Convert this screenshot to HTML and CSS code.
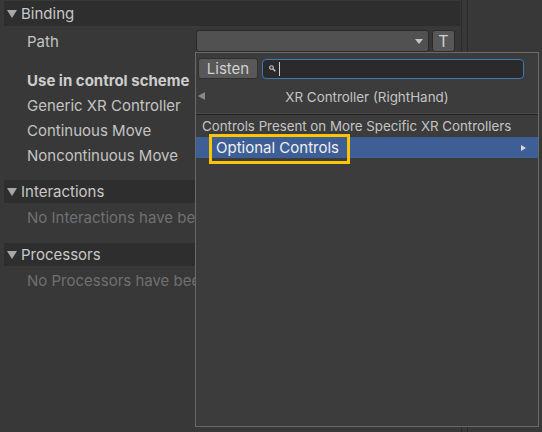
FILE: index.html
```html
<!DOCTYPE html>
<html>
<head>
<meta charset="utf-8">
<link rel="stylesheet" href="styles.css">
</head>
<body>
<div class="window">
  <div class="inspector">
    <div class="foldout">
      <span class="tri-down"></span><span class="foldout-title">Binding</span>
    </div>
    <div class="row row-path">
      <span class="label label-fixed">Path</span>
      <div class="path-field">
        <div class="dropdown"><span class="dd-arrow"></span></div>
        <div class="t-btn">T</div>
      </div>
    </div>
    <div class="row row-bold"><span class="label bold">Use in control scheme</span></div>
    <div class="row"><span class="label">Generic XR Controller</span></div>
    <div class="row"><span class="label">Continuous Move</span></div>
    <div class="row"><span class="label">Noncontinuous Move</span></div>
    <div class="foldout foldout-gap">
      <span class="tri-down"></span><span class="foldout-title">Interactions</span>
    </div>
    <div class="row row-note"><span class="label muted">No Interactions have been added.</span></div>
    <div class="foldout foldout-gap">
      <span class="tri-down"></span><span class="foldout-title">Processors</span>
    </div>
    <div class="row row-note"><span class="label muted">No Processors have been added.</span></div>
  </div>
  <div class="splitter"></div>
  <div class="side"></div>

  <div class="popup">
    <div class="toolbar">
      <div class="listen">Listen</div>
      <div class="search">
        <svg class="search-ico" width="7" height="7" viewBox="0 0 7 7">
          <circle cx="2.5" cy="2.5" r="1.8" fill="none" stroke="#c8c8c8" stroke-width="1.1"/>
          <path d="M3.8 3.8 L6.3 6.3" stroke="#c8c8c8" stroke-width="1.4"/>
        </svg>
        <span class="caret"></span>
      </div>
    </div>
    <div class="title-row">
      <span class="tri-left"></span>
      <span class="title">XR Controller (RightHand)</span>
    </div>
    <div class="sep"></div>
    <div class="group-label">Controls Present on More Specific XR Controllers</div>
    <div class="item selected">
      <span class="item-text">Optional Controls</span>
      <span class="tri-right"></span>
      <div class="highlight"></div>
    </div>
  </div>
</div>
</body>
</html>
```
FILE: styles.css
```css
html, body {
  margin: 0;
  padding: 0;
  background: #383838;
}
body {
  width: 542px;
  height: 432px;
  overflow: hidden;
  font-family: Inter, "Noto Sans", "DejaVu Sans", sans-serif;
  color: #c4c4c4;
}
.window {
  position: relative;
  display: flex;
  width: 542px;
  height: 432px;
}
.inspector {
  width: 462px;
  flex: none;
  display: flex;
  flex-direction: column;
  padding-left: 4px;
  box-sizing: border-box;
  border-right: 1px solid #2b2b2b;
}
.splitter {
  width: 5px;
  flex: none;
  border-right: 1px solid #2a2a2a;
}
.side {
  flex: 1;
  background: #383838;
}
.foldout {
  margin-top: 1px;
  height: 25px;
  width: 456px;
  background: #2e2e2e;
  display: flex;
  align-items: center;
  font-size: 15px;
}
.foldout-gap {
  margin-top: 12px;
  height: 23px;
}
.tri-down {
  width: 0;
  height: 0;
  margin-left: 3px;
  margin-right: 4px;
  border-left: 5px solid transparent;
  border-right: 5px solid transparent;
  border-top: 8px solid #a8a8a8;
}
.foldout-title {
  color: #c8c8c8;
}
.row {
  height: 25px;
  display: flex;
  align-items: center;
  font-size: 15px;
}
.row-path {
  margin-top: 2px;
  height: 26px;
}
.row-bold {
  margin-top: 13px;
  height: 26px;
}
.row-note {
  height: 28px;
}
.label {
  margin-left: 23px;
  white-space: nowrap;
}
.label-fixed {
  width: 169px;
  flex: none;
}
.bold {
  font-weight: 700;
  color: #cdcdcd;
}
.muted {
  color: #707070;
}
.path-field {
  display: flex;
  gap: 3px;
}
.dropdown {
  width: 233px;
  height: 22px;
  box-sizing: border-box;
  background: #515151;
  border-radius: 3px;
  border: 1px solid #2a2a2a;
  display: flex;
  align-items: center;
  justify-content: flex-end;
  padding-right: 5px;
}
.dd-arrow {
  width: 0;
  height: 0;
  border-left: 4px solid transparent;
  border-right: 4px solid transparent;
  border-top: 5px solid #c4c4c4;
}
.t-btn {
  width: 23px;
  height: 22px;
  box-sizing: border-box;
  background: #585858;
  border-radius: 3px;
  border: 1px solid #2a2a2a;
  display: flex;
  align-items: center;
  justify-content: center;
  font-size: 16px;
  color: #d0d0d0;
}

/* popup */
.popup {
  position: absolute;
  left: 195px;
  top: 52px;
  width: 344px;
  height: 375px;
  box-sizing: border-box;
  background: #3c3c3c;
  border: 1px solid #6a6a6a;
  display: flex;
  flex-direction: column;
}
.toolbar {
  display: flex;
  align-items: center;
  gap: 4px;
  padding: 5px 0 0 2px;
}
.listen {
  width: 60px;
  height: 21px;
  box-sizing: border-box;
  background: #585858;
  border: 1px solid #303030;
  border-radius: 3px;
  display: flex;
  align-items: center;
  justify-content: center;
  font-size: 15px;
  color: #d0d0d0;
}
.search {
  width: 262px;
  height: 20px;
  box-sizing: border-box;
  background: #2a2a2a;
  border: 1px solid #3a79bb;
  border-radius: 4px;
  display: flex;
  align-items: center;
  padding-left: 6px;
  gap: 3px;
}
.search-ico {
  display: block;
}
.caret {
  width: 1px;
  height: 14px;
  background: #d0d0d0;
}
.title-row {
  position: relative;
  height: 25px;
  margin-top: 5px;
  display: flex;
  align-items: center;
  justify-content: center;
  font-size: 13.4px;
}
.tri-left {
  position: absolute;
  left: 2px;
  top: 8px;
  width: 0;
  height: 0;
  border-top: 4px solid transparent;
  border-bottom: 4px solid transparent;
  border-right: 7px solid #8a8a8a;
}
.title {
  color: #c4c4c4;
}
.sep {
  margin-top: 4px;
  height: 1px;
  background: #232323;
  border-top: 1px solid #4a4a4a;
}
.group-label {
  height: 20px;
  margin-top: 1px;
  padding-left: 6px;
  display: flex;
  align-items: center;
  font-size: 13.3px;
  color: #c4c4c4;
  white-space: nowrap;
}
.item {
  position: relative;
  height: 21px;
  display: flex;
  align-items: center;
  margin-top: 1px;
}
.selected {
  background: #3e5f96;
}
.item-text {
  margin-left: 20px;
  font-size: 15px;
  color: #f0f0f0;
  flex: 1;
}
.tri-right {
  width: 0;
  height: 0;
  margin-right: 12px;
  border-top: 3px solid transparent;
  border-bottom: 3px solid transparent;
  border-left: 5px solid #d8d8d8;
}
.highlight {
  position: absolute;
  left: 13px;
  top: -3px;
  width: 141px;
  height: 30px;
  box-sizing: border-box;
  border: 3px solid #ffc400;
}
```
